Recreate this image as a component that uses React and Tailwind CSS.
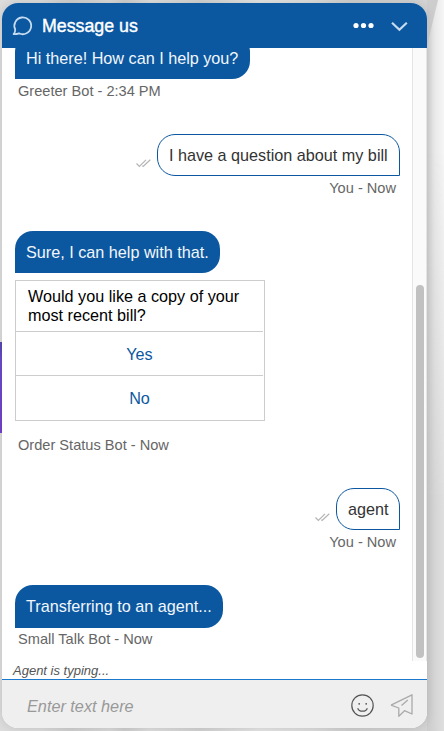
function BotBubble({ children, className = '' }) {
  return (
    <div className={`whitespace-nowrap rounded-[18px] rounded-bl-none bg-[#0b58a1] pl-[11px] text-[16.2px] text-[#f2f6fa] ${className}`}>
      {children}
    </div>
  );
}

function Ticks() {
  return (
    <svg width="15" height="9" viewBox="0 0 15 9" fill="none" stroke="#b4b4b4" strokeWidth="1.2" className="mb-[8px] shrink-0">
      <path d="M.5 4.5 3.4 7.4 10 .8M6.4 6.8l.7.6L14.3.8" />
    </svg>
  );
}

function UserMessage({ text, width, className = '' }) {
  return (
    <div className={`flex items-end justify-end gap-[6px] pr-[12px] ${className}`}>
      <Ticks />
      <div className={`h-[42px] whitespace-nowrap rounded-[18px] rounded-br-none border border-[#0b58a1] pl-[11px] text-[16.2px] leading-[40px] text-[#333] ${width}`}>
        {text}
      </div>
    </div>
  );
}

function Meta({ children, className = '' }) {
  return <div className={`h-[18px] whitespace-nowrap text-[14.6px] leading-[18px] text-[#666] ${className}`}>{children}</div>;
}

export default function App() {
  return (
    <div className="relative h-[731px] w-[444px] overflow-hidden bg-[linear-gradient(90deg,#dcdcdc_0_40px,#cfcfcf_70px,#d9d9d9_110px,#cecece_125px,#dedede_150px,#d2d2d2_200px,#e4e4e4_260px,#dddddd_310px,#cfcfcf_350px,#d3d3d3_427px,#e8e8e8_434px,#f6f6f6_444px)] pt-[3px] pl-[2px] font-['Liberation_Sans',Arial,sans-serif]">
      <div className="absolute top-[342px] left-0 h-[91px] w-[2px] bg-[linear-gradient(#5547b0,#6a4bcd_20%,#7341ca)]" />
      <div className="absolute top-[150px] right-0 h-[581px] w-[17px] bg-[linear-gradient(90deg,#cccccc,#dfdfdf)] [mask-image:linear-gradient(transparent,black_60%)]" />
      <svg width="17" height="50" viewBox="0 0 17 50" className="absolute top-0 right-0">
        <path d="M0 0h11L0 46Z" fill="#cdcdcd" />
      </svg>
      <main className="relative flex h-[725px] w-[425px] flex-col overflow-hidden rounded-[16px] bg-white shadow-[0_0_10px_rgba(0,0,0,0.12)]">
        <header className="flex h-[45px] shrink-0 items-center bg-[#0b58a1] pl-[10px]">
          <svg width="22" height="22" viewBox="0 0 22 22" fill="none" stroke="#c5dbef" strokeWidth="1.8" strokeLinejoin="round">
            <path d="M3.2 14.4A8.4 8.4 0 1 1 7 18.3Q4.8 19.2 1.6 19.1Q3.4 17.3 3.2 14.4Z" />
          </svg>
          <h1 className="ml-[8px] w-[290px] text-[17.8px] leading-[22px] font-normal text-white [-webkit-text-stroke:0.4px_white]">Message us</h1>
          <svg width="22" height="8" viewBox="0 0 22 8" fill="white" className="ml-[20px]">
            <circle cx="4" cy="3.5" r="2.6" /><circle cx="11.5" cy="3.5" r="2.6" /><circle cx="19" cy="3.5" r="2.6" />
          </svg>
          <svg width="18" height="12" viewBox="0 0 18 12" fill="none" stroke="#c7dbee" strokeWidth="2.2" className="ml-[16px]">
            <path d="m2 2.8 7.4 7L16.8 2.8" />
          </svg>
        </header>
        <div className="flex h-[613px] shrink-0">
          <section className="w-[410px] overflow-hidden pl-[13px]">
            <BotBubble className="-mt-[14px] h-[45px] w-[235px] pt-[3px] leading-[43px]">Hi there! How can I help you?</BotBubble>
            <Meta className="mt-[3px] pl-[3px]">Greeter Bot - 2:34 PM</Meta>
            <UserMessage text="I have a question about my bill" width="w-[243px]" className="mt-[34px]" />
            <Meta className="mt-[3px] pr-[16px] text-right">You - Now</Meta>
            <BotBubble className="mt-[34px] h-[42px] w-[205px] leading-[43px]">Sure, I can help with that.</BotBubble>
            <div className="mt-[7px] h-[141px] w-[250px] border border-[#ccc] pr-px text-[16.2px]">
              <p className="h-[51px] w-[247px] border-b border-[#ccc] pt-[6px] pl-[12px] leading-[19px] whitespace-nowrap text-black">Would you like a copy of your<br />most recent bill?</p>
              <button className="block h-[44px] w-[247px] border-b border-[#ccc] pt-[2px] text-[#0b58a1]">Yes</button>
              <button className="block h-[44px] w-[247px] text-[#0b58a1]">No</button>
            </div>
            <Meta className="mt-[15px] pl-[3px]">Order Status Bot - Now</Meta>
            <UserMessage text="agent" width="w-[64px]" className="mt-[34px]" />
            <Meta className="mt-[3px] pr-[16px] text-right">You - Now</Meta>
            <BotBubble className="mt-[34px] h-[43px] w-[208px] leading-[43px]">Transferring to an agent...</BotBubble>
            <Meta className="mt-[2px] pl-[3px]">Small Talk Bot - Now</Meta>
          </section>
          <div className="w-[15px] border-x border-[#e5e5e5] bg-[#fafafa] pt-[237px] pl-[3px]">
            <div className="h-[373px] w-[8px] rounded-full bg-[#c1c1c1]" />
          </div>
        </div>
        <div className="h-[18px] shrink-0 pl-[11px] text-[13px] leading-[20px] text-[#555] italic">Agent is typing...</div>
        <footer className="flex h-[49px] shrink-0 items-center border-t border-[#1a78cf] bg-[#efefef] pt-[3px] pl-[25px]">
          <span className="w-[323px] pt-[2px] text-[16.25px] text-[#999] italic">Enter text here</span>
          <svg width="24" height="24" viewBox="0 0 24 24" fill="none" stroke="#555" strokeWidth="1.2">
            <circle cx="12.5" cy="11.5" r="10.7" /><path d="M7.7 14.2c1.3 4 8.3 4 9.6 0" />
            <circle cx="9.2" cy="9.8" r=".9" fill="#555" stroke="none" /><circle cx="16.2" cy="9.8" r=".9" fill="#555" stroke="none" />
          </svg>
          <svg width="24" height="24" viewBox="0 0 24 24" fill="none" stroke="#aaa" strokeWidth="1.3" strokeLinejoin="round" className="ml-[16px]">
            <path d="M1 11.2 22 .8V20L14.5 16.7 8.8 22.2V14L1 11.2M11.5 11.5 17.8 6" />
          </svg>
        </footer>
      </main>
    </div>
  );
}
